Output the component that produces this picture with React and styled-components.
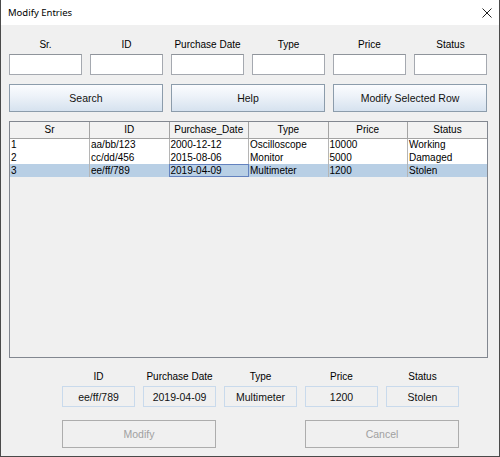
import React from 'react'
import styled, { createGlobalStyle } from 'styled-components'

const GlobalStyle = createGlobalStyle`
  html, body {
    margin: 0;
    padding: 0;
    background: #ffffff;
  }
  * {
    box-sizing: border-box;
  }
`

const columns = ['Sr.', 'ID', 'Purchase Date', 'Type', 'Price', 'Status']
const headers = ['Sr', 'ID', 'Purchase_Date', 'Type', 'Price', 'Status']

const rows = [
  ['1', 'aa/bb/123', '2000-12-12', 'Oscilloscope', '10000', 'Working'],
  ['2', 'cc/dd/456', '2015-08-06', 'Monitor', '5000', 'Damaged'],
  ['3', 'ee/ff/789', '2019-04-09', 'Multimeter', '1200', 'Stolen'],
]

const selectedRow = 2
const focusCol = 2

const details = [
  ['ID', 'ee/ff/789'],
  ['Purchase Date', '2019-04-09'],
  ['Type', 'Multimeter'],
  ['Price', '1200'],
  ['Status', 'Stolen'],
]

function App() {
  return (
    <>
      <GlobalStyle />
      <Window>
        <TitleBar>
          <span>Modify Entries</span>
          <svg width="10" height="10" viewBox="0 0 10 10">
            <path d="M0.5 0.5 L9.5 9.5 M9.5 0.5 L0.5 9.5" stroke="#222" strokeWidth="1" fill="none" />
          </svg>
        </TitleBar>
        <Body>
          <SearchGrid>
            {columns.map((c) => (
              <Field key={c}>
                <Label>{c}</Label>
                <TextInput />
              </Field>
            ))}
          </SearchGrid>
          <ButtonRow>
            <Button>Search</Button>
            <Button>Help</Button>
            <Button>Modify Selected Row</Button>
          </ButtonRow>
          <TablePane>
            <Table>
              <thead>
                <tr>
                  {headers.map((h) => (
                    <HeadCell key={h}>{h}</HeadCell>
                  ))}
                </tr>
              </thead>
              <tbody>
                {rows.map((r, i) => (
                  <tr key={r[0]}>
                    {r.map((v, j) => (
                      <Cell key={j} $selected={i === selectedRow} $focus={i === selectedRow && j === focusCol}>
                        {v}
                      </Cell>
                    ))}
                  </tr>
                ))}
              </tbody>
            </Table>
          </TablePane>
          <DetailGrid>
            {details.map(([label, value]) => (
              <Field key={label}>
                <Label>{label}</Label>
                <ReadOnly>{value}</ReadOnly>
              </Field>
            ))}
            <DisabledButton $col="1 / 3">Modify</DisabledButton>
            <DisabledButton $col="4 / 6">Cancel</DisabledButton>
          </DetailGrid>
        </Body>
      </Window>
    </>
  )
}

const Window = styled.div`
  width: 500px;
  height: 457px;
  display: flex;
  flex-direction: column;
  border-left: 1px solid #4a4a4a;
  border-right: 1px solid #4a4a4a;
  border-bottom: 1px solid #4a4a4a;
  background: #f0f0f0;
`

const TitleBar = styled.div`
  height: 25px;
  flex-shrink: 0;
  background: #ffffff;
  display: flex;
  align-items: center;
  justify-content: space-between;
  padding: 0 7px 0 7px;
  font-family: "Noto Sans", sans-serif;
  font-size: 9.5px;
  color: #000;
  svg {
    display: block;
  }
`

const Body = styled.div`
  flex: 1;
  display: flex;
  flex-direction: column;
  padding: 13px 11px 0 8px;
  font-family: "Liberation Sans", Arial, sans-serif;
`

const SearchGrid = styled.div`
  display: grid;
  grid-template-columns: repeat(6, 73px);
  column-gap: 8px;
`

const Field = styled.div`
  display: flex;
  flex-direction: column;
  align-items: center;
  gap: 3px;
`

const Label = styled.div`
  height: 13px;
  line-height: 13px;
  font-size: 10px;
  color: #000;
  white-space: nowrap;
`

const TextInput = styled.div`
  width: 100%;
  height: 21px;
  background: #ffffff;
  border: 1px solid #a5a9b0;
  border-top-color: #8f949b;
`

const ButtonRow = styled.div`
  display: grid;
  grid-template-columns: repeat(3, 154px);
  column-gap: 8px;
  margin-top: 9px;
`

const Button = styled.div`
  height: 28px;
  display: flex;
  align-items: center;
  justify-content: center;
  font-size: 10.5px;
  color: #111;
  border: 1px solid #8c9cab;
  background: linear-gradient(#fbfcfe 0%, #eef3f9 40%, #d6e2ef 100%);
`

const TablePane = styled.div`
  margin-top: 9px;
  height: 237px;
  width: 479px;
  border: 1px solid #828790;
  background: #f0f0f0;
`

const Table = styled.table`
  width: 100%;
  table-layout: fixed;
  border-collapse: collapse;
  font-size: 10px;
`

const HeadCell = styled.th`
  height: 16px;
  padding: 0;
  font-weight: normal;
  text-align: center;
  background: #f2f2f2;
  border-right: 1px solid #a3a3a3;
  border-bottom: 1px solid #a3a3a3;
  &:last-child {
    border-right: none;
  }
`

const Cell = styled.td`
  height: 13px;
  padding: 0 0 0 1px;
  line-height: 12px;
  white-space: nowrap;
  overflow: hidden;
  background: ${(p) => (p.$selected ? '#b8cfe5' : '#ffffff')};
  border-right: 1px solid #b5b5b5;
  outline: ${(p) => (p.$focus ? '1px solid #6382bf' : 'none')};
  outline-offset: -1px;
  &:last-child {
    border-right: none;
  }
`

const DetailGrid = styled.div`
  display: grid;
  grid-template-columns: repeat(5, 73px);
  column-gap: 8px;
  row-gap: 13px;
  margin-top: 12px;
  padding-left: 53px;
`

const ReadOnly = styled.div`
  width: 100%;
  height: 21px;
  display: flex;
  align-items: center;
  justify-content: center;
  font-size: 10.5px;
  color: #111;
  background: #f0f0f0;
  border: 1px solid #c9daec;
`

const DisabledButton = styled.div`
  grid-column: ${(p) => p.$col};
  height: 28px;
  display: flex;
  align-items: center;
  justify-content: center;
  font-size: 10.5px;
  color: #a0a0a0;
  background: #f0f0f0;
  border: 1px solid #adadad;
`

export default App
